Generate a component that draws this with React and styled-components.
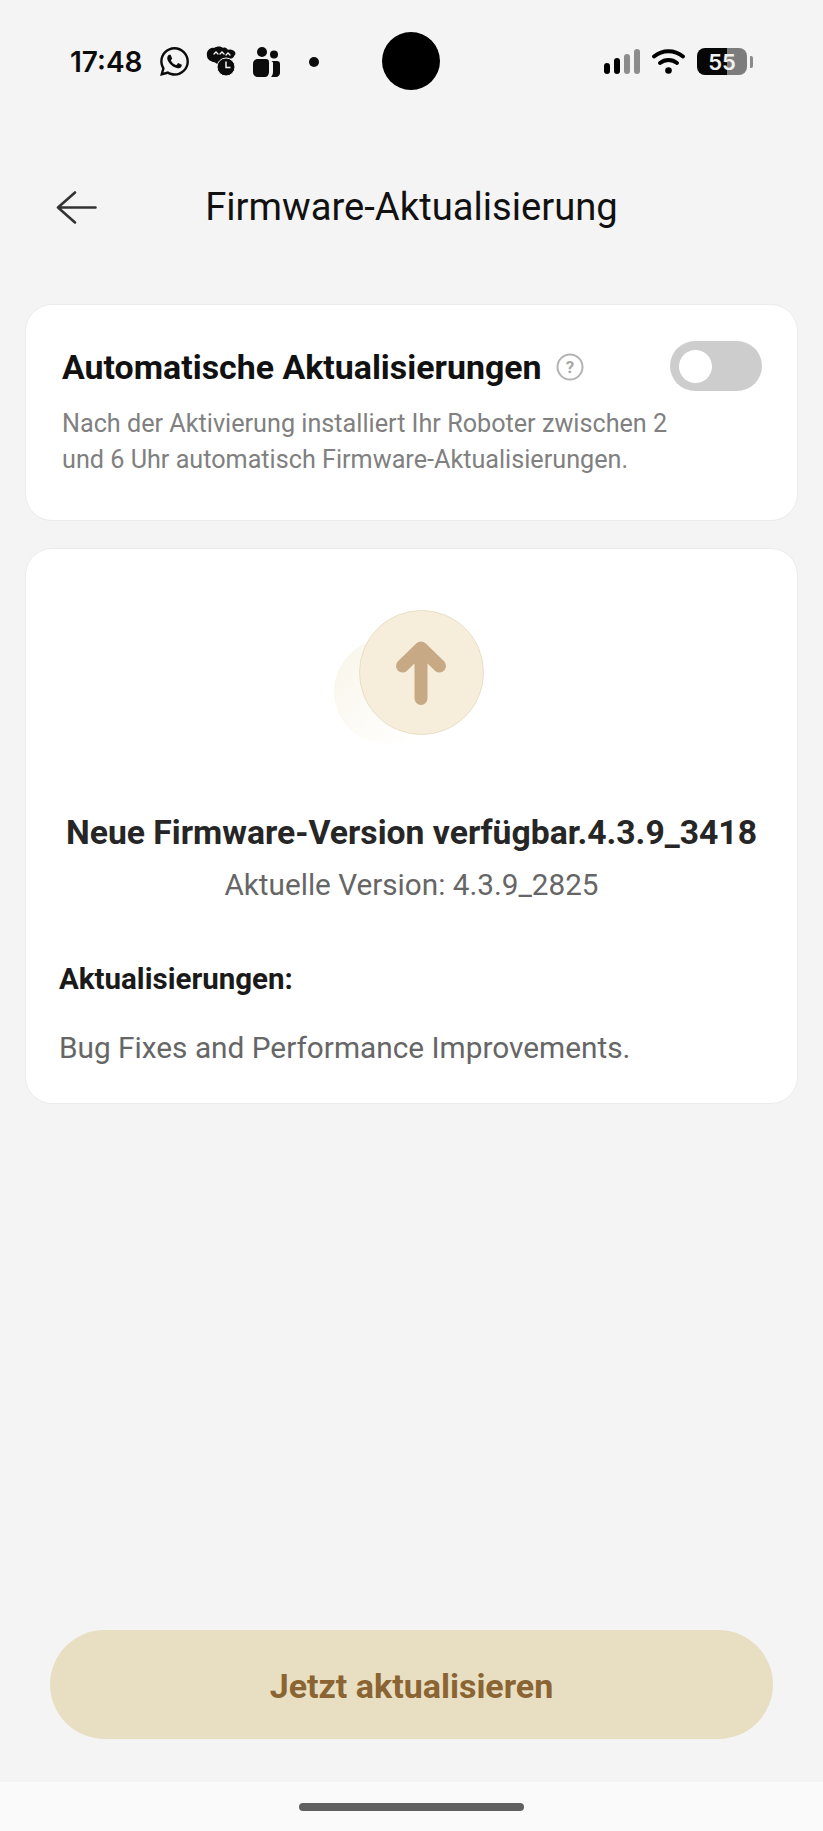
import React from 'react'
import styled, { createGlobalStyle } from 'styled-components'
import { FaWhatsapp } from 'react-icons/fa'

const Global = createGlobalStyle`
  html, body { margin: 0; padding: 0; background: #f4f4f4; }
  * { box-sizing: border-box; }
`

const Page = styled.div`
  width: 823px;
  height: 1831px;
  display: flex;
  flex-direction: column;
  background: #f4f4f4;
  font-family: Roboto, "Liberation Sans", sans-serif;
`

const StatusBar = styled.div`
  height: 123px;
  padding: 0 70px 0 70px;
  display: flex;
  align-items: center;
  justify-content: space-between;
  position: relative;
`

const StatusLeft = styled.div`
  display: flex;
  align-items: center;
`

const Clock = styled.span`
  font-family: Inter, sans-serif;
  font-size: 28px;
  font-weight: 600;
  color: #0c0c0c;
  width: 90px;
`

const StatusIcons = styled.div`
  display: flex;
  align-items: center;
  gap: 17px;
  color: #0c0c0c;
`

const NotifyDot = styled.div`
  width: 10px;
  height: 10px;
  margin-left: 12px;
  border-radius: 50%;
  background: #0c0c0c;
`

const Camera = styled.div`
  position: absolute;
  left: 382px;
  top: 32px;
  width: 58px;
  height: 58px;
  border-radius: 50%;
  background: #000;
`

const StatusRight = styled.div`
  display: flex;
  align-items: center;
  gap: 12px;
`

const Battery = styled.div`
  display: flex;
  align-items: center;
  gap: 3px;
`

const BatteryBody = styled.div`
  width: 50px;
  height: 27px;
  border-radius: 8px;
  background: linear-gradient(90deg, #070707 0 60%, #7c7c7c 60% 100%);
  color: #f2f2f2;
  font-family: Inter, sans-serif;
  font-size: 22px;
  font-weight: 600;
  display: flex;
  align-items: center;
  justify-content: center;
`

const BatteryCap = styled.div`
  width: 3px;
  height: 12px;
  border-radius: 0 2px 2px 0;
  background: #8a8a8a;
`

const Header = styled.header`
  height: 112px;
  margin-top: 28px;
  padding: 0 56px;
  display: grid;
  grid-template-columns: 1fr auto 1fr;
  align-items: center;
`

const BackButton = styled.div`
  display: flex;
  color: #333;
`

const Title = styled.h1`
  margin: 0;
  font-size: 38.2px;
  font-weight: 400;
  color: #111;
`

const Main = styled.main`
  margin-top: 41px;
  padding: 0 25px;
  display: flex;
  flex-direction: column;
  gap: 27px;
`

const Card = styled.section`
  background: #fff;
  border: 1px solid #ebebeb;
  border-radius: 27px;
`

const AutoCard = styled(Card)`
  height: 217px;
  padding: 36px 35px 0 36px;
`

const AutoRow = styled.div`
  display: flex;
  align-items: center;
  justify-content: space-between;
`

const AutoHeading = styled.div`
  display: flex;
  align-items: center;
  gap: 14px;
  padding-top: 2px;
`

const AutoTitle = styled.h2`
  margin: 0;
  font-size: 33.9px;
  font-weight: 700;
  color: #111;
`

const Toggle = styled.div`
  width: 92px;
  height: 50px;
  border-radius: 25px;
  background: #cdcdcd;
  padding: 8.5px;
`

const Knob = styled.div`
  width: 33px;
  height: 33px;
  border-radius: 50%;
  background: #fff;
`

const AutoText = styled.p`
  margin: 15px 0 0;
  font-size: 25.2px;
  line-height: 36px;
  color: #808080;
`

const FirmwareCard = styled(Card)`
  height: 556px;
  padding: 0 33px;
  display: flex;
  flex-direction: column;
`

const BadgeWrap = styled.div`
  margin: 61px auto 0;
  width: 150px;
  height: 134px;
  position: relative;
  left: -3px;
`

const BadgeShadow = styled.div`
  position: absolute;
  left: 0;
  top: 29px;
  width: 105px;
  height: 105px;
  border-radius: 50%;
  background: linear-gradient(135deg, #faf7ee 20%, #fdfcf8 60%, #ffffff 95%);
`

const Badge = styled.div`
  position: absolute;
  left: 25px;
  top: 0;
  width: 125px;
  height: 125px;
  border-radius: 50%;
  background: #f6eeda;
  border: 1px solid #e8dfc6;
  display: flex;
  align-items: center;
  justify-content: center;
`

const VersionTitle = styled.h2`
  margin: 69px 0 0;
  text-align: center;
  font-size: 33.7px;
  font-weight: 700;
  color: #262626;
  white-space: nowrap;
`

const CurrentVersion = styled.p`
  margin: 15px 0 0;
  text-align: center;
  font-size: 29.7px;
  color: #666;
`

const NotesTitle = styled.h3`
  margin: 60px 0 0;
  font-size: 29.5px;
  font-weight: 700;
  color: #1a1a1a;
`

const NotesText = styled.p`
  margin: 34px 0 0;
  font-size: 29.8px;
  color: #666;
`

const Footer = styled.div`
  margin-top: auto;
  padding: 0 50px 43px;
`

const UpdateButton = styled.button`
  width: 100%;
  height: 109px;
  padding: 2px 0 0;
  border: none;
  border-radius: 55px;
  background: #e8dfc2;
  color: #8b6433;
  font-family: inherit;
  font-size: 34px;
  font-weight: 700;
`

const NavBar = styled.div`
  height: 49px;
  background: #fafafa;
  display: flex;
  justify-content: center;
  padding-top: 21px;
`

const Handle = styled.div`
  width: 225px;
  height: 8px;
  border-radius: 4px;
  background: #606060;
`

const WhatsappGlyph = styled(FaWhatsapp)`
  margin: 0 -2px;
`

const MonsterIcon = () => (
  <svg width="30" height="31" viewBox="0 0 30 31">
    <path fill="currentColor" d="M1 10C0 5 4 1 8 2c3-2 7-2 9 0 2-1 4 0 5 2 2-1 6 0 7 2 1 2 0 3-1 4 0 2-3 3-6 3-2 0-4 1-5 3-2 2-4 3-6 2-1-1-2-2-4-2-3-1-6-3-6-6z" />
    <path fill="none" stroke="#f4f4f4" strokeWidth="1.3" strokeLinecap="round" d="M8 8l2-2 2 2M14 8l2-2 2 2M20 9l2-2 2 2" />
    <circle cx="20" cy="21" r="9" fill="currentColor" stroke="#f4f4f4" strokeWidth="1" />
    <path fill="none" stroke="#f4f4f4" strokeWidth="1.5" d="M20 15.5V21.5h4.5" />
  </svg>
)

const PeopleIcon = () => (
  <svg width="27" height="30" viewBox="0 0 27 30">
    <circle cx="9" cy="5" r="5" fill="currentColor" />
    <circle cx="21" cy="7.5" r="4" fill="currentColor" />
    <path fill="currentColor" d="M0 17c0-3 2-5 5-5h8c2 0 3 1 3 3v10c0 3-2 5-4 5H5c-3 0-5-2-5-5z" />
    <path fill="currentColor" d="M18 14h6c2 0 3 1 3 3v9c0 2-2 4-4 4h-5c1-1 2-3 2-5V16c0-1-1-2-2-2z" />
  </svg>
)

const SignalIcon = () => (
  <svg width="36" height="25" viewBox="0 0 36 25">
    <rect x="0" y="14" width="6" height="11" rx="3" fill="#000" />
    <rect x="10" y="9" width="6" height="16" rx="3" fill="#000" />
    <rect x="20" y="5" width="6" height="20" rx="3" fill="#8c8c8c" />
    <rect x="30" y="0" width="6" height="25" rx="3" fill="#8c8c8c" />
  </svg>
)

const WifiIcon = () => (
  <svg width="33" height="25" viewBox="0 0 33 25">
    <path fill="none" stroke="#000" strokeWidth="3.8" strokeLinecap="round" d="M2 7.5c8.5-7 20.5-7 29 0M8 14c5-4 12-4 17 0" />
    <circle cx="16.5" cy="21.5" r="3.3" fill="#000" />
  </svg>
)

const HelpIcon = () => (
  <svg width="28" height="28" viewBox="0 0 28 28">
    <circle cx="14" cy="14" r="12.5" fill="none" stroke="#b3b3b3" strokeWidth="2" />
    <text x="14" y="20" textAnchor="middle" fontSize="17" fontWeight="700" fill="#a6a6a6" fontFamily="Roboto, sans-serif">?</text>
  </svg>
)

const ArrowUp = () => (
  <svg width="50" height="64" viewBox="0 0 50 64">
    <path fill="none" stroke="#c8a985" strokeWidth="13" strokeLinecap="round" strokeLinejoin="round" d="M6.5 25L25 7l18.5 18M25 8v49.5" />
  </svg>
)

export default function App() {
  return (
    <Page>
      <Global />
      <StatusBar>
        <StatusLeft>
          <Clock>17:48</Clock>
          <StatusIcons>
            <WhatsappGlyph size={33} />
            <MonsterIcon />
            <PeopleIcon />
            <NotifyDot />
          </StatusIcons>
        </StatusLeft>
        <Camera />
        <StatusRight>
          <SignalIcon />
          <WifiIcon />
          <Battery>
            <BatteryBody>55</BatteryBody>
            <BatteryCap />
          </Battery>
        </StatusRight>
      </StatusBar>
      <Header>
        <BackButton>
          <svg width="41" height="33" viewBox="0 0 41 33">
            <path fill="none" stroke="currentColor" strokeWidth="2.6" strokeLinecap="round" strokeLinejoin="round" d="M19 1.5L2 16.5l17 15M2 16.5h37.5" />
          </svg>
        </BackButton>
        <Title>Firmware-Aktualisierung</Title>
      </Header>
      <Main>
        <AutoCard>
          <AutoRow>
            <AutoHeading>
              <AutoTitle>Automatische Aktualisierungen</AutoTitle>
              <HelpIcon />
            </AutoHeading>
            <Toggle><Knob /></Toggle>
          </AutoRow>
          <AutoText>
            Nach der Aktivierung installiert Ihr Roboter zwischen 2<br />
            und 6 Uhr automatisch Firmware-Aktualisierungen.
          </AutoText>
        </AutoCard>
        <FirmwareCard>
          <BadgeWrap>
            <BadgeShadow />
            <Badge><ArrowUp /></Badge>
          </BadgeWrap>
          <VersionTitle>Neue Firmware-Version verfügbar.4.3.9_3418</VersionTitle>
          <CurrentVersion>Aktuelle Version: 4.3.9_2825</CurrentVersion>
          <NotesTitle>Aktualisierungen:</NotesTitle>
          <NotesText>Bug Fixes and Performance Improvements.</NotesText>
        </FirmwareCard>
      </Main>
      <Footer>
        <UpdateButton>Jetzt aktualisieren</UpdateButton>
      </Footer>
      <NavBar><Handle /></NavBar>
    </Page>
  )
}
